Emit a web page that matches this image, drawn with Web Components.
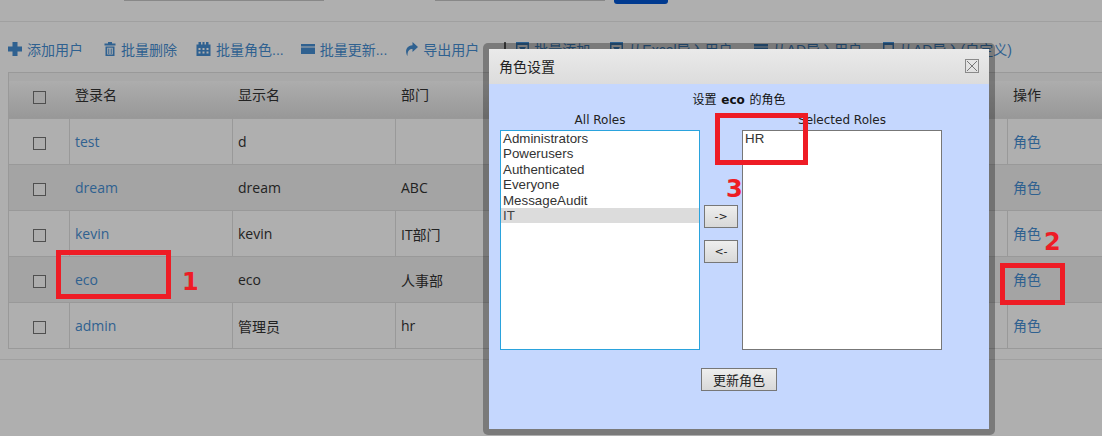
<!DOCTYPE html>
<html lang="zh"><head><meta charset="utf-8"><style>
html,body{margin:0;height:436px;overflow:hidden;background:#afafaf;font:14px "Liberation Sans","Noto Sans CJK SC",sans-serif;color:#222}
</style></head><body>
<user-page></user-page>
<script>
const ICONS={
plus:[14,14,'<path d="M4.5 0h5v4.5H14v5H9.5V14h-5V9.5H0v-5h4.5z"/>'],
trash:[12,14,'<path d="M4 0h4v1.500h3.500v2H.5v-2H4zM1.500 4.500h9V14h-9zM3.200 5.800v6.700h5.600V5.800zM4.300 6.500h1V12h-1zM6.700 6.500h1V12h-1z" fill-rule="evenodd"/>'],
cal:[15,14,'<path d="M.5 2.500h2V0h2.500v2.500h1.500V0h2v2.500h1.500V0H12.500v2.500h2V14H.5zM2.500 6v2h2V6zm4 0v2h2V6zm4 0v2h2V6zm-8 3.500v2h2v-2zm4 0v2h2v-2zm4 0v2h2v-2z" fill-rule="evenodd"/>'],
card:[14,14,'<path d="M0 2h14v2.500H0zM0 5.500h14V12H0z"/>'],
share:[13,14,'<path d="M7.500 0L13 5 7.500 10V7C4.500 7 2.500 8.500 2.500 14 .5 11.500-.5 4 7.500 3.200z"/>'],
box:[13,14,'<path d="M0 0h13v14H0zM1.500 3v9.500h10V3zM3 5h7L6.500 10z" fill-rule="evenodd"/>'],
doc:[11,14,'<path d="M0 0h11v14H0zM1.500 3v9.500h8V3z" fill-rule="evenodd"/>']
};
class XIcon extends HTMLElement{connectedCallback(){const [w,h,p]=ICONS[this.getAttribute('name')];const s=this.attachShadow({mode:'open'});s.innerHTML=`<style>:host{display:inline-flex}svg{display:block;fill:currentColor}</style><svg width="${w}" height="${h}" viewBox="0 0 ${w} ${h}">${p}</svg>`}}
customElements.define('x-icon',XIcon);

class XTool extends HTMLElement{connectedCallback(){const s=this.attachShadow({mode:'open'});s.innerHTML=`<style>:host{display:inline-flex;align-items:center;gap:5px;color:#2f6190;font-size:14px;white-space:nowrap;margin-left:var(--gap,0)}</style><slot name="i"></slot><slot></slot>`}}
customElements.define('x-tool',XTool);

class UserTable extends HTMLElement{connectedCallback(){
const rows=[['test','d',''],['dream','dream','ABC'],['kevin','kevin','IT部门'],['eco','eco','人事部'],['admin','管理员','hr']];
const s=this.attachShadow({mode:'open'});
s.innerHTML=`<style>
:host{display:block;margin:0 0 0 8px;width:1094px;font-family:"Open Sans","Noto Sans CJK SC",sans-serif}
.grid{display:grid;grid-template-columns:60px 163px 163px 612px 95px;border-top:1px solid #999;border-left:1px solid #999}
.c{height:45px;border-right:1px solid #999;border-bottom:1px solid #999;display:flex;align-items:center;padding-left:6px;font-size:14px;box-sizing:border-box;height:46px;margin-right:-1px;white-space:nowrap;color:#222}
.c.h{background:linear-gradient(#a9a9a9 0,#a9a9a9 8px,#adadad 8px,#989898 100%);padding-bottom:4px}
.c.h.cb{padding-bottom:0}
.c.act{padding-bottom:2px}
.c.alt{background:#a4a4a4}
.c.cb{justify-content:center;padding-left:1px}
.box{width:11px;height:11px;margin-top:4px;border:1px solid #4f4f4f;background:#adadad}
.h .box{background:#a3a3a3}
a{color:#2f6190;text-decoration:none}
</style><div class="grid">
<div class="c h cb"><span class="box"></span></div><div class="c h">登录名</div><div class="c h">显示名</div><div class="c h">部门</div><div class="c h">操作</div>
${rows.map((r,i)=>{const a=i%2?' alt':'';return `<div class="c cb${a}"><span class="box"></span></div><div class="c${a}"><a>${r[0]}</a></div><div class="c${a}">${r[1]}</div><div class="c${a}">${r[2]}</div><div class="c act${a}"><a>角色</a></div>`}).join('')}
</div>`}}
customElements.define('user-table',UserTable);

class RoleDialog extends HTMLElement{connectedCallback(){
const s=this.attachShadow({mode:'open'});
const all=['Administrators','Powerusers','Authenticated','Everyone','MessageAudit','IT'];
s.innerHTML=`<style>
:host{position:absolute;left:483px;top:43px;width:500px;height:380px;padding:6px;background:rgba(0,0,0,.3);border-radius:5px;display:block;font:12px "DejaVu Sans","Noto Sans CJK SC",sans-serif;color:#111}
.in{height:100%;display:flex;flex-direction:column;background:#c5d7fe}
.title{height:35px;flex:none;display:flex;align-items:center;justify-content:space-between;padding:0 10px 2px;background:linear-gradient(#eaeaea,#dcdcdc);font-size:14px;color:#222;box-sizing:border-box}
.x{width:12px;height:12px;border:1px solid #8a8a8a;position:relative;display:block}
.x svg{position:absolute;left:1px;top:1px}
.body{flex:1;display:flex;flex-direction:column;align-items:center}
.head{margin-top:7px;height:18px;line-height:18px;word-spacing:1px}
.cols{display:flex;align-self:flex-start;margin-left:11px;margin-top:2px}
.col{width:200px;display:flex;flex-direction:column;align-items:center}
.lbl{height:19px;line-height:18px;color:#222}
.list{width:198px;height:218px;background:#fff;border:1px solid #777;font:13.33px/15.4px "Liberation Sans",sans-serif;color:#333}
.list.f{border-color:#2aa3dd}
.list div{padding-left:2px}
.sel{background:#dcdcdc;color:#444}
.mid{width:42px;display:flex;flex-direction:column;align-items:center;gap:12px;padding-top:94px}
.btn{font:11px "DejaVu Sans","Noto Sans CJK SC",sans-serif;width:34px;height:23px;display:flex;align-items:center;justify-content:center;border:1px solid #777;background:linear-gradient(#eee,#d8d8d8);box-sizing:border-box;color:#222}
.up{width:76px;margin-top:18px;font-size:13px}
</style><div class="in"><div class="title"><span>角色设置</span><span class="x"><svg width="10" height="10" viewBox="0 0 10 10"><path d="M0 0l10 10M10 0L0 10" stroke="#777" stroke-width="1"/></svg></span></div>
<div class="body"><div class="head">设置 <b>eco</b> 的角色</div>
<div class="cols"><div class="col"><div class="lbl">All Roles</div><div class="list f">${all.map(a=>`<div${a=='IT'?' class="sel"':''}>${a}</div>`).join('')}</div></div>
<div class="mid"><div class="btn">-&gt;</div><div class="btn">&lt;-</div></div>
<div class="col"><div class="lbl">Selected Roles</div><div class="list"><div>HR</div></div></div></div>
<div class="btn up">更新角色</div></div></div>`}}
customElements.define('role-dialog',RoleDialog);

class RedMark extends HTMLElement{connectedCallback(){const s=this.attachShadow({mode:'open'});const [x,y,w,h]=this.getAttribute('box').split(',');
s.innerHTML=`<style>:host{position:absolute;left:${x}px;top:${y}px;width:${w}px;height:${h}px;box-sizing:border-box;border:5px solid #ee1c25;display:block}</style>`}}
customElements.define('red-mark',RedMark);
class RedNum extends HTMLElement{connectedCallback(){const s=this.attachShadow({mode:'open'});const [x,y]=this.getAttribute('at').split(',');
s.innerHTML=`<style>:host{position:absolute;left:${x}px;top:${y}px;display:block;color:#ee1c25;font:bold 24px/28px "DejaVu Sans",sans-serif}</style><slot></slot>`}}
customElements.define('red-num',RedNum);

class UserPage extends HTMLElement{connectedCallback(){const s=this.attachShadow({mode:'open'});
s.innerHTML=`<style>
:host{display:block;position:relative;height:436px;overflow:hidden}
.top{height:21px;border-bottom:1px solid #a0a0a0;position:relative}
.f1{position:absolute;left:124px;top:-11px;width:198px;height:10px;border:1px solid #888;background:#b2b2b2}
.f1 i{position:absolute;right:0;top:0;bottom:0;width:19px;background:#555}
.f2{position:absolute;left:435px;top:-11px;width:168px;height:10px;border:1px solid #888;background:#b2b2b2}
.b{position:absolute;left:614px;top:-8px;width:54px;height:12px;background:#003a90;border-radius:3px}
.bar{display:flex;padding:3px 0 0 8px;height:50px;box-sizing:border-box;align-items:center;white-space:nowrap}
.sep{width:2px;height:14px;background:#444;margin-left:25px}
.foot{border-top:1px solid #a0a0a0;margin-top:10px}
</style>
<div class="top"><div class="f1"><i></i></div><div class="f2"></div><div class="b"></div></div>
<div class="bar">
<x-tool><x-icon slot="i" name="plus"></x-icon>添加用户</x-tool>
<x-tool style="--gap:21px"><x-icon slot="i" name="trash"></x-icon>批量删除</x-tool>
<x-tool style="--gap:19px"><x-icon slot="i" name="cal"></x-icon>批量角色...</x-tool>
<x-tool style="--gap:17px"><x-icon slot="i" name="card"></x-icon>批量更新...</x-tool>
<x-tool style="--gap:18px"><x-icon slot="i" name="share"></x-icon>导出用户</x-tool>
<span class="sep"></span>
<x-tool style="--gap:10px"><x-icon slot="i" name="box"></x-icon>批量添加</x-tool>
<x-tool style="--gap:20px"><x-icon slot="i" name="box"></x-icon>从Excel导入用户</x-tool>
<x-tool style="--gap:21px"><x-icon slot="i" name="card"></x-icon>从AD导入用户</x-tool>
<x-tool style="--gap:21px"><x-icon slot="i" name="doc"></x-icon>从AD导入(自定义)</x-tool>
</div>
<user-table></user-table>
<div class="foot"></div>
<role-dialog></role-dialog>
<red-mark box="56,250,115,49"></red-mark>
<red-mark box="1000,263,65,42"></red-mark>
<red-mark box="715,113,93,52"></red-mark>
<red-num at="182,268">1</red-num>
<red-num at="1044,228">2</red-num>
<red-num at="726,175">3</red-num>`}}
customElements.define('user-page',UserPage);
</script></body></html>
